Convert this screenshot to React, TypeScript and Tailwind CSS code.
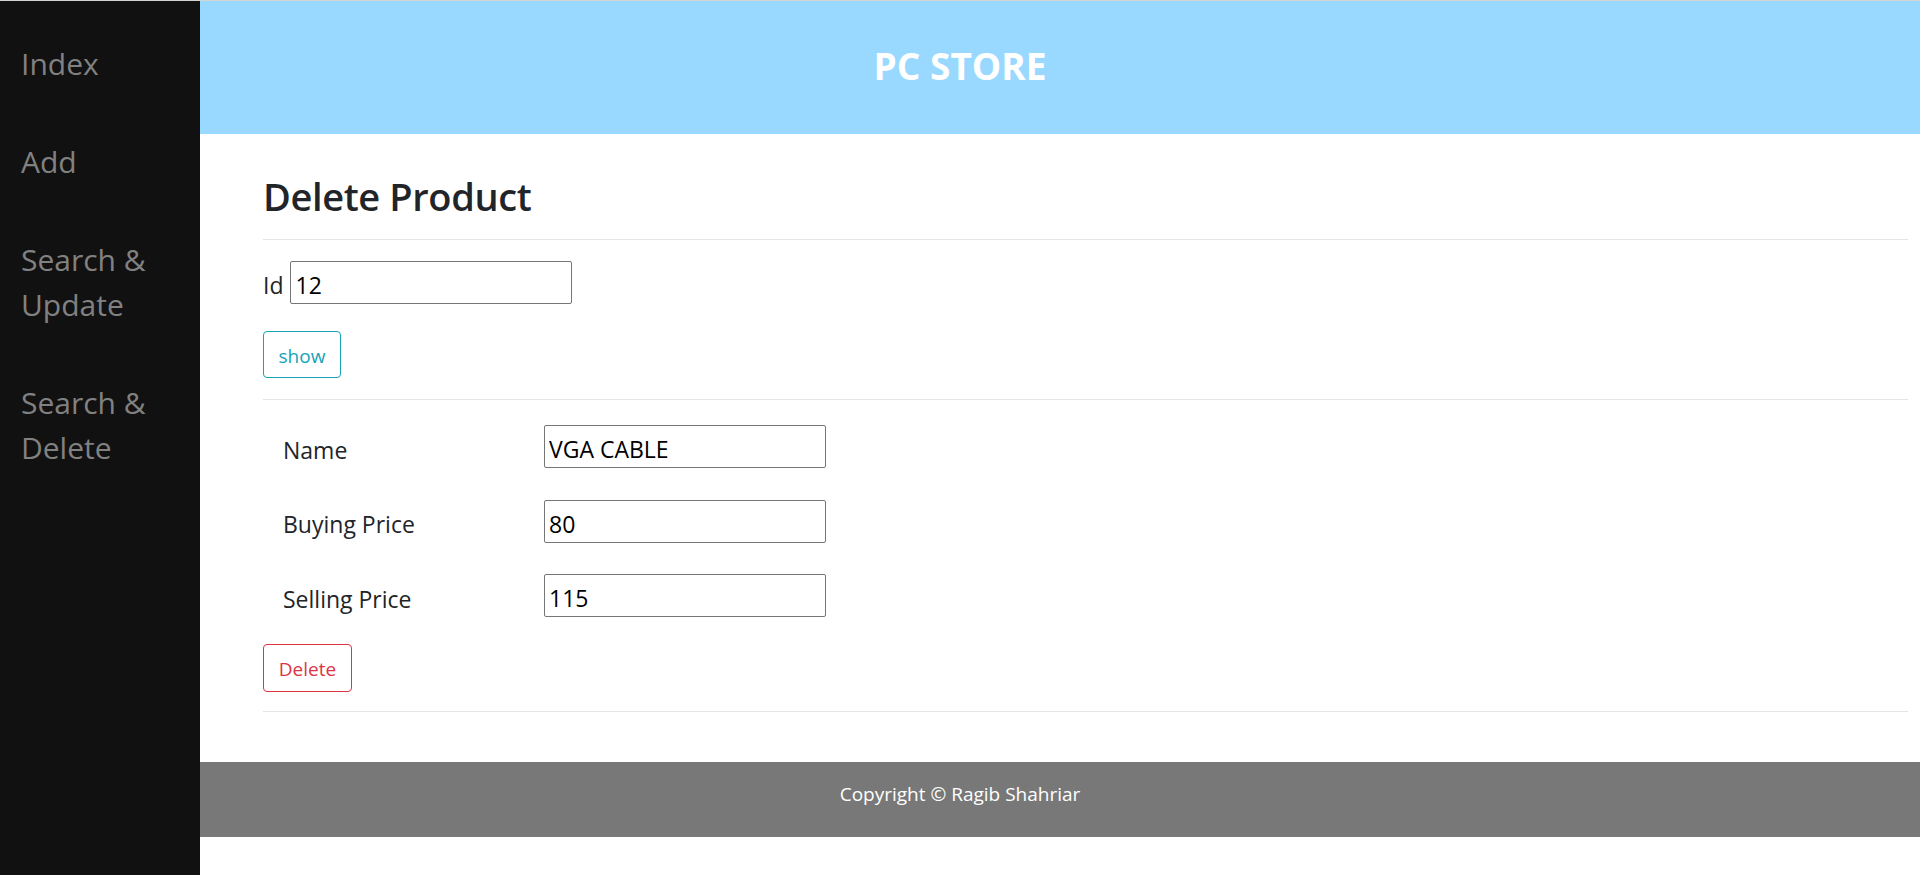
import React from 'react'

const navItems = ['Index', 'Add', 'Search & Update', 'Search & Delete']

const fields = [
    { label: 'Name', value: 'VGA CABLE' },
    { label: 'Buying Price', value: '80' },
    { label: 'Selling Price', value: '115' },
]

const Sidebar = () => (
    <nav className="fixed top-px left-0 bottom-0 w-[200px] bg-[#111111] pt-[40px] pl-[21px] pr-[10px]">
        <div className="flex flex-col gap-[53px]">
            {navItems.map((item) => (
                <a key={item} href="#" className="block text-[30px] leading-[45px] text-[#818181]">
                    {item}
                </a>
            ))}
        </div>
    </nav>
)

const DeleteProduct = () => (
    <main className="ml-[263px] mr-[12px]">
        <h1 className="mt-[39px] text-[38px] leading-[46px] font-semibold text-[#212529] tracking-[-0.01em]">
            Delete Product
        </h1>
        <hr className="mt-[20px] border-t border-[#e5e5e5]" />

        <div className="mt-[21px] flex items-center">
            <label className="pt-[6px] text-[23px] text-[#212529]">Id</label>
            <input
                readOnly
                value="12"
                className="ml-[6px] h-[43px] w-[282px] rounded-[2px] border border-[#767676] px-[5px] pt-[5px] text-[23px] text-black outline-none"
            />
        </div>
        <button className="mt-[27px] h-[47px] w-[78px] rounded-[4px] border border-[#17a2b8] pt-[3px] text-[19px] text-[#17a2b8]">
            show
        </button>
        <hr className="mt-[21px] border-t border-[#e5e5e5]" />

        <div className="mt-[25px] flex flex-col gap-[31.5px]">
            {fields.map((f) => (
                <div key={f.label} className="flex items-center">
                    <label className="ml-[20px] w-[261px] pt-[7px] text-[23px] text-[#212529]">{f.label}</label>
                    <input
                        readOnly
                        value={f.value}
                        className="h-[43px] w-[282px] rounded-[2px] border border-[#767676] px-[4px] pt-[5px] text-[23px] text-black outline-none"
                    />
                </div>
            ))}
        </div>
        <button className="mt-[27px] h-[48px] w-[89px] rounded-[4px] border border-[#dc3545] pt-[3px] text-[19px] text-[#dc3545]">
            Delete
        </button>
        <hr className="mt-[19px] border-t border-[#e5e5e5]" />
    </main>
)

export default function App() {
    return (
        <div className="relative min-h-[875px] bg-white font-['Open_Sans',sans-serif]">
            <div className="h-px bg-[#d4d4d4]" />
            <header className="flex h-[133px] items-center justify-center bg-[#99d9ff] pb-[4px]">
                <span className="text-[37px] font-bold text-white">PC STORE</span>
            </header>
            <DeleteProduct />
            <footer className="mt-[50px] flex h-[75px] items-center justify-center bg-[#787878] pb-[10px]">
                <span className="text-[19px] text-white">Copyright © Ragib Shahriar</span>
            </footer>
            <Sidebar />
        </div>
    )
}
